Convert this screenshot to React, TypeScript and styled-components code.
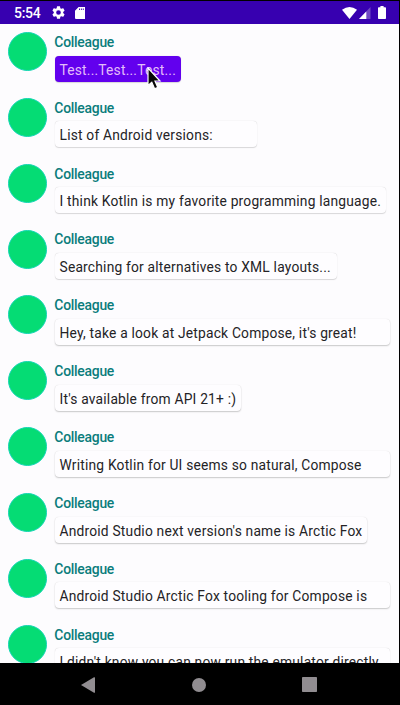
import React from "react";
import styled, { createGlobalStyle } from "styled-components";

const GlobalStyle = createGlobalStyle`
  * { box-sizing: border-box; }
  body { margin: 0; background: #000; font-family: Roboto, sans-serif; }
`;

const Screen = styled.div`
  width: 400px;
  height: 705px;
  padding: 1px 1.5px 0 0;
  display: flex;
  flex-direction: column;
  overflow: hidden;
  background: #000;
`;

const StatusBar = styled.header`
  flex: none;
  height: 23px;
  padding: 0 13px 0 14px;
  display: flex;
  align-items: center;
  background: #3700b0;
  color: #fff;
`;

const Clock = styled.span`
  width: 38px;
  padding-top: 1px;
  font-size: 14px;
  line-height: 20px;
  font-weight: 500;
  letter-spacing: -0.3px;
`;

const StatusIcons = styled.div`
  display: flex;
  align-items: center;
`;

const SystemIcons = styled(StatusIcons)`
  margin-left: auto;
`;

const StatusIcon = styled.svg<{ $gap?: number }>`
  display: block;
  margin-left: ${({ $gap }) => $gap ?? 0}px;
`;

const Conversation = styled.main`
  flex: none;
  height: 639px;
  overflow: hidden;
  background: #fdfcfe;
`;

const MessageRow = styled.article`
  height: 65.87px;
  padding: 8px 8px 0;
  display: flex;
  align-items: flex-start;
  gap: 8px;
`;

const Avatar = styled.div`
  flex: none;
  width: 39px;
  height: 39px;
  border: 1px solid #13d6b4;
  border-radius: 50%;
  background: #05dc74;
`;

const MessageBody = styled.div`
  flex: 1;
  display: flex;
  flex-direction: column;
  align-items: flex-start;
`;

const Author = styled.div`
  height: 23.6px;
  padding-top: 1.8px;
  margin-left: -0.7px;
  color: #0a7c7b;
  font-size: 13.9px;
  line-height: 16px;
  font-weight: 500;
  letter-spacing: -0.25px;
`;

const Bubble = styled.div<{ $width: number; $selected?: boolean; $raised?: boolean }>`
  position: relative;
  width: ${({ $width }) => $width}px;
  height: 26px;
  padding: 0 4.5px;
  border-radius: 4px;
  background: ${({ $selected }) => ($selected ? "#6200ee" : "#fefdff")};
  color: ${({ $selected }) => ($selected ? "#e2bdf9" : "#242326")};
  box-shadow: ${({ $raised }) =>
    $raised
      ? "0 1px 1.5px rgba(0,0,0,.2), 0 0 1px rgba(0,0,0,.12)"
      : "0 0.5px 1px rgba(0,0,0,.14), 0 0 1px rgba(0,0,0,.1)"};
  font-size: 13.8px;
  line-height: 28.4px;
  letter-spacing: 0.2px;
  white-space: nowrap;
`;

const Pointer = styled.svg`
  position: absolute;
  left: 91.5px;
  top: 11px;
`;

const NavigationBar = styled.nav`
  flex: 1;
  padding: 1px 81.5px 0 81px;
  display: flex;
  align-items: center;
  justify-content: space-between;
`;

const NavIcon = styled.svg`
  display: block;
  fill: #918d91;
`;

type Message = { text: string; width: number; selected?: boolean; raised?: boolean };

const messages: Message[] = [
  { text: "Test...Test...Test...", width: 126.3, selected: true },
  { text: "List of Android versions:", width: 201.5 },
  { text: "I think Kotlin is my favorite programming language.", width: 331 },
  { text: "Searching for alternatives to XML layouts...", width: 281.5 },
  { text: "Hey, take a look at Jetpack Compose, it's great!", width: 335, raised: true },
  { text: "It's available from API 21+ :)", width: 186.3, raised: true },
  { text: "Writing Kotlin for UI seems so natural, Compose", width: 335, raised: true },
  { text: "Android Studio next version's name is Arctic Fox", width: 311.5, raised: true },
  { text: "Android Studio Arctic Fox tooling for Compose is", width: 335, raised: true },
  { text: "I didn't know you can now run the emulator directly", width: 335 },
];

const GEAR =
  "M19.14 12.94c.04-.3.06-.61.06-.94s-.02-.64-.07-.94l2.03-1.58a.49.49 0 0 0 .12-.61l-1.92-3.32a.49.49 0 0 0-.59-.22l-2.39.96a7 7 0 0 0-1.62-.94l-.36-2.54a.48.48 0 0 0-.48-.41h-3.84a.48.48 0 0 0-.47.41l-.36 2.54c-.59.24-1.13.57-1.62.94l-2.39-.96a.48.48 0 0 0-.59.22L2.74 8.87a.48.48 0 0 0 .12.61l2.03 1.58c-.05.3-.09.63-.09.94s.02.64.07.94l-2.03 1.58a.49.49 0 0 0-.12.61l1.92 3.32c.12.22.37.29.59.22l2.39-.96c.5.38 1.03.7 1.62.94l.36 2.54c.05.24.24.41.48.41h3.84c.24 0 .44-.17.47-.41l.36-2.54a7 7 0 0 0 1.62-.94l2.39.96c.22.08.47 0 .59-.22l1.92-3.32a.48.48 0 0 0-.12-.61zM12 15.6a3.6 3.6 0 1 1 0-7.2 3.6 3.6 0 0 1 0 7.2z";

export default function App() {
  return (
    <>
      <GlobalStyle />
      <Screen>
        <StatusBar>
          <Clock>5:54</Clock>
          <StatusIcons>
            <StatusIcon width="13" height="13" viewBox="2 2 20 20" fill="#fff">
              <path d={GEAR} />
            </StatusIcon>
            <StatusIcon $gap={9.5} width="10.5" height="12" viewBox="0 0 10.5 12">
              <path
                fill="#fff"
                fillRule="evenodd"
                d="M3.6 0H9.4Q10.5 0 10.5 1V11Q10.5 12 9.5 12H1Q0 12 0 11V3.7ZM4 1.5V2.9H4.9V1.5ZM5.9 1.5V2.9H6.8V1.5ZM7.8 1.5V2.9H8.7V1.5Z"
              />
            </StatusIcon>
          </StatusIcons>
          <SystemIcons>
            <StatusIcon width="15" height="12" viewBox="0 0 15 12">
              <path fill="#fff" d="M0 2.8Q7.5-2.6 15 2.8L7.5 12Z" />
            </StatusIcon>
            <StatusIcon $gap={2.5} width="11.5" height="12" viewBox="0 0 11.5 12">
              <path fill="#6f48c4" d="M11.5 0V12H0Z" />
              <path fill="#fff" d="M7.3 4.4V12H0Z" />
            </StatusIcon>
            <StatusIcon $gap={7} width="8" height="13" viewBox="0 0 8 13">
              <path
                fill="#fff"
                d="M2.4 0H5.6V1.3H7.2Q8 1.3 8 2.1V12.2Q8 13 7.2 13H.8Q0 13 0 12.2V2.1Q0 1.3.8 1.3H2.4Z"
              />
            </StatusIcon>
          </SystemIcons>
        </StatusBar>
        <Conversation>
          {messages.map(({ text, width, selected, raised }) => (
            <MessageRow key={text}>
              <Avatar />
              <MessageBody>
                <Author>Colleague</Author>
                <Bubble $width={width} $selected={selected} $raised={raised}>
                  {text}
                  {selected && (
                    <Pointer width="15" height="24" viewBox="0 0 15 24">
                      <path
                        d="M1 1V18.5L4.8 15.2 7.6 21.8 10.8 20.4 8 14H13Z"
                        fill="#080808"
                        stroke="#fff"
                        strokeWidth="1.2"
                      />
                    </Pointer>
                  )}
                </Bubble>
              </MessageBody>
            </MessageRow>
          ))}
        </Conversation>
        <NavigationBar>
          <NavIcon width="14" height="16" viewBox="0 0 14 16">
            <path d="M0 8 13 .3Q14-.1 14 .8V15.2Q14 16.1 13 15.7Z" />
          </NavIcon>
          <NavIcon width="14" height="14" viewBox="0 0 14 14">
            <circle cx="7" cy="7" r="7" />
          </NavIcon>
          <NavIcon width="15" height="15" viewBox="0 0 15 15">
            <rect width="15" height="15" rx=".7" />
          </NavIcon>
        </NavigationBar>
      </Screen>
    </>
  );
}
